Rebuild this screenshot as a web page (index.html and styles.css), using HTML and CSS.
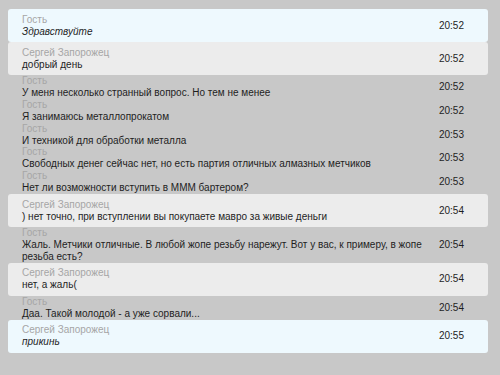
FILE: index.html
```html
<!DOCTYPE html>
<html lang="ru">
<head>
    <meta charset="UTF-8">
    <title>Чат</title>
    <link rel="stylesheet" href="styles.css">
</head>
<body>
    <div class="chat">
        <div class="msg msg-new">
            <div class="body">
                <div class="author">Гость</div>
                <div class="text"><i>Здравствуйте</i></div>
            </div>
            <div class="time">20:52</div>
        </div>
        <div class="msg msg-op">
            <div class="body">
                <div class="author">Сергей Запорожец</div>
                <div class="text">добрый день</div>
            </div>
            <div class="time">20:52</div>
        </div>
        <div class="msg">
            <div class="body">
                <div class="author">Гость</div>
                <div class="text">У меня несколько странный вопрос. Но тем не менее</div>
            </div>
            <div class="time">20:52</div>
        </div>
        <div class="msg">
            <div class="body">
                <div class="author">Гость</div>
                <div class="text">Я занимаюсь металлопрокатом</div>
            </div>
            <div class="time">20:52</div>
        </div>
        <div class="msg">
            <div class="body">
                <div class="author">Гость</div>
                <div class="text">И техникой для обработки металла</div>
            </div>
            <div class="time">20:53</div>
        </div>
        <div class="msg">
            <div class="body">
                <div class="author">Гость</div>
                <div class="text">Свободных денег сейчас нет, но есть партия отличных алмазных метчиков</div>
            </div>
            <div class="time">20:53</div>
        </div>
        <div class="msg">
            <div class="body">
                <div class="author">Гость</div>
                <div class="text">Нет ли возможности вступить в МММ бартером?</div>
            </div>
            <div class="time">20:53</div>
        </div>
        <div class="msg msg-op">
            <div class="body">
                <div class="author">Сергей Запорожец</div>
                <div class="text">) нет точно, при вступлении вы покупаете мавро за живые деньги</div>
            </div>
            <div class="time">20:54</div>
        </div>
        <div class="msg">
            <div class="body">
                <div class="author">Гость</div>
                <div class="text">Жаль. Метчики отличные. В любой жопе резьбу нарежут. Вот у вас, к примеру, в жопе резьба есть?</div>
            </div>
            <div class="time">20:54</div>
        </div>
        <div class="msg msg-op">
            <div class="body">
                <div class="author">Сергей Запорожец</div>
                <div class="text">нет, а жаль(</div>
            </div>
            <div class="time">20:54</div>
        </div>
        <div class="msg">
            <div class="body">
                <div class="author">Гость</div>
                <div class="text">Даа. Такой молодой - а уже сорвали...</div>
            </div>
            <div class="time">20:54</div>
        </div>
        <div class="msg msg-new">
            <div class="body">
                <div class="author">Сергей Запорожец</div>
                <div class="text"><i>прикинь</i></div>
            </div>
            <div class="time">20:55</div>
        </div>
    </div>
</body>
</html>
```

FILE: styles.css
```css
body {
    margin: 0;
    padding: 9px 12px 0 8px;
    background: #c8c8c8;
    font-family: 'Liberation Sans', Arial, sans-serif;
    font-size: 10px;
    color: #1e1e1e;
}

.chat {
    width: 480px;
}

.msg {
    display: flex;
    align-items: center;
    padding: 0 0 0 14px;
    line-height: 11.9px;
}

.msg-new,
.msg-op {
    padding-top: 4.6px;
    padding-bottom: 4.6px;
    border-radius: 3px;
}

.msg-new {
    background: #eef9fe;
}

.msg-op {
    background: #ececec;
}

.body {
    flex: 1;
}

.author {
    color: #a6a6a6;
}

.time {
    width: 38px;
    margin-right: 24px;
    text-align: right;
}
```
